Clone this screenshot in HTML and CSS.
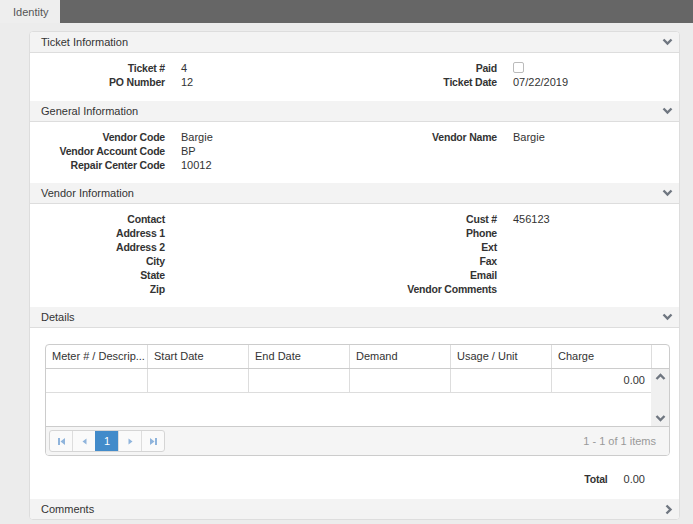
FILE: index.html
```html
<!DOCTYPE html>
<html lang="en">
<head>
    <meta charset="UTF-8">
    <title>Ticket</title>
    <link rel="stylesheet" href="styles.css">
</head>
<body>
    <div class="tabbar">
        <div class="tab">Identity</div>
    </div>

    <div class="card">
        <div class="section-header">
            <span>Ticket Information</span>
            <svg class="chev" width="11" height="8" viewBox="0 0 11 8"><polyline points="1.5,1.5 5.5,5.5 9.5,1.5"/></svg>
        </div>
        <div class="section-body ticket">
            <div class="half">
                <div class="row"><span class="label">Ticket #</span><span class="value">4</span></div>
                <div class="row"><span class="label">PO Number</span><span class="value">12</span></div>
            </div>
            <div class="half">
                <div class="row"><span class="label">Paid</span><span class="value"><span class="checkbox"></span></span></div>
                <div class="row"><span class="label">Ticket Date</span><span class="value">07/22/2019</span></div>
            </div>
        </div>

        <div class="section-header">
            <span>General Information</span>
            <svg class="chev" width="11" height="8" viewBox="0 0 11 8"><polyline points="1.5,1.5 5.5,5.5 9.5,1.5"/></svg>
        </div>
        <div class="section-body">
            <div class="half">
                <div class="row"><span class="label">Vendor Code</span><span class="value">Bargie</span></div>
                <div class="row"><span class="label">Vendor Account Code</span><span class="value">BP</span></div>
                <div class="row"><span class="label">Repair Center Code</span><span class="value">10012</span></div>
            </div>
            <div class="half">
                <div class="row"><span class="label">Vendor Name</span><span class="value">Bargie</span></div>
            </div>
        </div>

        <div class="section-header">
            <span>Vendor Information</span>
            <svg class="chev" width="11" height="8" viewBox="0 0 11 8"><polyline points="1.5,1.5 5.5,5.5 9.5,1.5"/></svg>
        </div>
        <div class="section-body">
            <div class="half">
                <div class="row"><span class="label">Contact</span><span class="value"></span></div>
                <div class="row"><span class="label">Address 1</span><span class="value"></span></div>
                <div class="row"><span class="label">Address 2</span><span class="value"></span></div>
                <div class="row"><span class="label">City</span><span class="value"></span></div>
                <div class="row"><span class="label">State</span><span class="value"></span></div>
                <div class="row"><span class="label">Zip</span><span class="value"></span></div>
            </div>
            <div class="half">
                <div class="row"><span class="label">Cust #</span><span class="value">456123</span></div>
                <div class="row"><span class="label">Phone</span><span class="value"></span></div>
                <div class="row"><span class="label">Ext</span><span class="value"></span></div>
                <div class="row"><span class="label">Fax</span><span class="value"></span></div>
                <div class="row"><span class="label">Email</span><span class="value"></span></div>
                <div class="row"><span class="label">Vendor Comments</span><span class="value"></span></div>
            </div>
        </div>

        <div class="section-header">
            <span>Details</span>
            <svg class="chev" width="11" height="8" viewBox="0 0 11 8"><polyline points="1.5,1.5 5.5,5.5 9.5,1.5"/></svg>
        </div>
        <div class="details-body">
            <div class="grid">
                <div class="grid-head">
                    <div class="cell">Meter # / Descrip...</div>
                    <div class="cell">Start Date</div>
                    <div class="cell">End Date</div>
                    <div class="cell">Demand</div>
                    <div class="cell">Usage / Unit</div>
                    <div class="cell charge">Charge</div>
                    <div class="cell scroll-head"></div>
                </div>
                <div class="grid-content">
                    <div class="grid-rows">
                        <div class="grid-row">
                            <div class="cell"></div>
                            <div class="cell"></div>
                            <div class="cell"></div>
                            <div class="cell"></div>
                            <div class="cell"></div>
                            <div class="cell charge num">0.00</div>
                        </div>
                    </div>
                    <div class="scrollbar">
                        <svg width="11" height="8" viewBox="0 0 11 8"><polyline points="1.5,6 5.5,2 9.5,6"/></svg>
                        <svg width="11" height="8" viewBox="0 0 11 8"><polyline points="1.5,2 5.5,6 9.5,2"/></svg>
                    </div>
                </div>
                <div class="pager">
                    <div class="pager-nav">
                        <span class="pbtn"><svg width="9" height="9" viewBox="0 0 9 9"><rect x="1" y="1" width="2" height="7"/><polygon points="8,1 8,8 3.5,4.5"/></svg></span>
                        <span class="pbtn"><svg width="9" height="9" viewBox="0 0 9 9"><polygon points="6.5,1.5 6.5,7.5 2.5,4.5"/></svg></span>
                        <span class="pbtn active">1</span>
                        <span class="pbtn"><svg width="9" height="9" viewBox="0 0 9 9"><polygon points="2.5,1.5 2.5,7.5 6.5,4.5"/></svg></span>
                        <span class="pbtn"><svg width="9" height="9" viewBox="0 0 9 9"><polygon points="1,1 1,8 5.5,4.5"/><rect x="6" y="1" width="2" height="7"/></svg></span>
                    </div>
                    <span class="pager-info">1 - 1 of 1 items</span>
                </div>
            </div>
            <div class="total">
                <span class="total-label">Total</span>
                <span class="total-value">0.00</span>
            </div>
        </div>

        <div class="section-header last">
            <span>Comments</span>
            <svg class="chev" width="8" height="11" viewBox="0 0 8 11"><polyline points="1.5,1.5 5.5,5.5 1.5,9.5"/></svg>
        </div>
    </div>
</body>
</html>
```

FILE: styles.css
```css
body {
    font-family: "Liberation Sans", Arial, sans-serif;
    font-size: 11px;
    margin: 0;
    padding: 0;
    background-color: #ececec;
    color: #333;
}

.tabbar {
    height: 23px;
    background-color: #666;
    display: flex;
}

.tab {
    width: 60px;
    background-color: #eee;
    color: #555;
    font-size: 11px;
    line-height: 24px;
    padding-left: 13px;
    box-sizing: border-box;
}

.card {
    margin: 8px 13px 0 29px;
    background-color: #fff;
    border: 1px solid #ddd;
    border-radius: 4px;
    overflow: hidden;
}

.section-header {
    height: 20px;
    line-height: 20px;
    background-color: #f3f3f3;
    border-bottom: 1px solid #ddd;
    padding: 0 6px 0 11px;
    display: flex;
    justify-content: space-between;
    align-items: center;
}

.section-header.last {
    border-bottom: none;
}

.chev polyline,
.scrollbar polyline {
    fill: none;
    stroke: #6f7680;
    stroke-width: 2.4;
}

.section-body {
    display: flex;
    padding: 8px 0 11px;
}

.section-body.ticket {
    padding-bottom: 12px;
}

.half {
    width: 332px;
    flex-shrink: 0;
}

.half + .half {
    flex: 1;
}

.row {
    display: flex;
    height: 14px;
    line-height: 14px;
}

.label {
    width: 135px;
    text-align: right;
    font-weight: bold;
    font-size: 10.5px;
    letter-spacing: -0.2px;
    flex-shrink: 0;
}

.value {
    padding-left: 16px;
}

.checkbox {
    display: inline-block;
    width: 9px;
    height: 9px;
    border: 1px solid #bbb;
    border-radius: 2px;
    vertical-align: -1px;
}

.details-body {
    padding: 16px 9px 13px 15px;
}

.grid {
    border: 1px solid #ccc;
    border-radius: 4px;
    overflow: hidden;
}

.grid-head, .grid-row {
    display: flex;
    height: 23px;
    line-height: 23px;
}

.grid-head {
    border-bottom: 1px solid #ccc;
}

.cell {
    width: 101px;
    padding: 0 6px;
    box-sizing: border-box;
    border-left: 1px solid #ddd;
    white-space: nowrap;
    flex-shrink: 0;
}

.cell:first-child {
    border-left: none;
}

.cell.charge {
    width: 100px;
}

.grid-head .scroll-head {
    width: 18px;
}

.cell.num {
    text-align: right;
    padding-right: 6px;
}

.grid-content {
    display: flex;
    height: 57px;
}

.grid-rows {
    flex: 1;
}

.grid-row {
    border-bottom: 1px solid #ddd;
}

.scrollbar {
    width: 18px;
    background-color: #f0f0f0;
    display: flex;
    flex-direction: column;
    justify-content: space-between;
    align-items: center;
    padding: 4px 0;
    box-sizing: border-box;
}

.pager {
    height: 28px;
    background-color: #f5f5f5;
    border-top: 1px solid #ccc;
    display: flex;
    align-items: center;
    justify-content: space-between;
    padding: 0 13px 0 3px;
}

.pager-nav {
    display: flex;
    border: 1px solid #d5d5d5;
    border-radius: 3px;
    overflow: hidden;
    background-color: #fafafa;
}

.pbtn {
    width: 22px;
    height: 20px;
    display: flex;
    align-items: center;
    justify-content: center;
    border-left: 1px solid #ddd;
}

.pbtn:first-child {
    border-left: none;
}

.pbtn svg {
    fill: #8fb4dc;
}

.pbtn.active {
    background-color: #428bca;
    color: #fff;
    border-left-color: #428bca;
}

.pager-info {
    color: #999;
}

.total {
    display: flex;
    justify-content: flex-end;
    line-height: 14px;
    padding: 16px 25px 0 0;
}

.total-label {
    font-weight: bold;
    font-size: 10.5px;
    letter-spacing: -0.2px;
    margin-right: 16px;
}
```
